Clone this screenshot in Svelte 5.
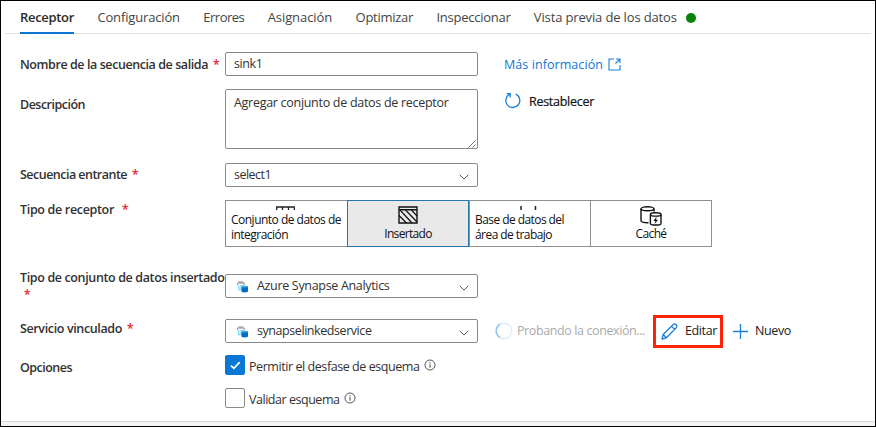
<script>
  const tabs = [
    { name: 'Receptor', w: 54, active: true },
    { name: 'Configuración', w: 82.5 },
    { name: 'Errores', w: 41 },
    { name: 'Asignación', w: 64.5 },
    { name: 'Optimizar', w: 57.5 },
    { name: 'Inspeccionar', w: 74 },
    { name: 'Vista previa de los datos', w: 143 }
  ];

  // Spreads the letters of a label so that it takes the given width.
  function fit(node, width) {
    const natural = node.getBoundingClientRect().width;
    node.style.letterSpacing = `${(width - natural) / node.textContent.length}px`;
  }
</script>

{#snippet t(text, width)}<span class="t" use:fit={width}>{text}</span>{/snippet}

{#snippet chevron()}
  <svg class="chev" width="10" height="6" viewBox="0 0 10 6"><path d="M.7 .8 5 5 9.3 .8" fill="none" stroke="#555" stroke-width="1" /></svg>
{/snippet}

{#snippet synapse()}
  <svg class="syn" width="13" height="13" viewBox="0 0 13 13">
    <path d="M.8 5V3.2L3 1.2H6.6L9 3.2V5H7.8V3.8H2V5z" fill="#a9a9a9" />
    <path d="M2 5h1.5v1.5H2zM4.3 5h1.5v1.5H4.3zM6.5 4.7H8v1.2H6.5zM2 7.2h1.5v1.5H2zM4.3 7.2h1v1.5h-1zM2 9.3h3v1H2z" fill="#5fd6f2" />
    <path d="M5.4 6.8v4.4c0 1.6 6.6 1.6 6.6 0V6.8z" fill="#0669c4" />
    <ellipse cx="8.7" cy="6.7" rx="3.3" ry=".9" fill="#38a6e8" />
  </svg>
{/snippet}

{#snippet info()}
  <svg class="info" width="12" height="12" viewBox="0 0 12 12"><circle cx="6" cy="6" r="5" fill="none" stroke="#444" stroke-width=".9" /><path d="M6 5.2V8.7M6 3.2v1.1" stroke="#444" stroke-width="1" /></svg>
{/snippet}

<div class="panel">
  <nav class="tabs">
    {#each tabs as tab}
      <div class="tab" class:active={tab.active}>{@render t(tab.name, tab.w)}</div>
    {/each}
    <i class="dot"></i>
  </nav>

  <div class="form">
    <div class="row name">
      <div class="label">{@render t('Nombre de la secuencia de salida', 188)}<b>*</b></div>
      <div class="box">{@render t('sink1', 28.5)}</div>
      <div class="side link">
        {@render t('Más información', 99)}
        <svg class="ext" width="13" height="13" viewBox="0 0 13 13"><path d="M6 1H1v11h11V7M8 1h4v4M12 1 7.5 5.5" fill="none" stroke="#1a7fd8" stroke-width="1.1" /></svg>
      </div>
    </div>

    <div class="row desc">
      <div class="label">{@render t('Descripción', 65)}</div>
      <div class="box area">
        {@render t('Agregar conjunto de datos de receptor', 214.5)}
        <svg class="grip" width="8" height="8" viewBox="0 0 8 8"><path d="M.5 7.5l7-7M4.5 7.5l3-3" stroke="#777" /></svg>
      </div>
      <div class="side reset">
        <svg width="17" height="17" viewBox="0 0 17 17"><path d="M5.4 2.4A7 7 0 1 0 11.8 2.2M2.6 1.6h3.6v3.8" fill="none" stroke="#1a7fd8" stroke-width="1.3" /></svg>
        {@render t('Restablecer', 65)}
      </div>
    </div>

    <div class="row incoming">
      <div class="label">{@render t('Secuencia entrante', 107)}<b>*</b></div>
      <div class="box">{@render t('select1', 37)}{@render chevron()}</div>
    </div>

    <div class="row kind">
      <div class="label">{@render t('Tipo de receptor', 94)}<b class="far">*</b></div>
      <div class="tiles">
        <div class="tile">
          <svg width="19" height="4" viewBox="0 0 19 4"><path d="M.7 4V1H18.3V4M6.5 1v3M12.5 1v3" fill="none" stroke="#222" stroke-width="1.3" /></svg>
          <div>{@render t('Conjunto de datos de', 110)}</div>
          <div>{@render t('integración', 57)}</div>
        </div>
        <div class="tile center selected">
          <svg width="20" height="18" viewBox="0 0 20 18"><path d="M1 1h18v16H1zM1 3.8h18" fill="none" stroke="#111" stroke-width="1.4" /><path d="M1 9.5l7.5 7.5M2 4l12 13M7.5 4l11.5 12M13.5 4l5.5 6" fill="none" stroke="#111" stroke-width="1.2" /></svg>
          <div>{@render t('Insertado', 47.5)}</div>
        </div>
        <div class="tile">
          <svg class="ticks" width="19" height="4" viewBox="0 0 19 4"><path d="M2 0v4M16.5 0v4" stroke="#222" stroke-width="1.5" /></svg>
          <div>{@render t('Base de datos del', 89)}</div>
          <div>{@render t('área de trabajo', 77)}</div>
        </div>
        <div class="tile center last">
          <svg width="22" height="20" viewBox="0 0 22 20"><g fill="none" stroke="#111" stroke-width="1.4"><ellipse cx="7.5" cy="2.8" rx="6.5" ry="2" /><path d="M1 2.8v12c0 1.4 3.5 2.1 7.5 2M14 2.8v3" /><ellipse cx="15.7" cy="8.4" rx="5.3" ry="1.7" /><path d="M10.4 8.4v9c0 2.2 10.6 2.2 10.6 0v-9" /></g><path d="M16.7 10.6 13.4 15h2l-.8 3 3.5-4.2h-2.1z" fill="#111" /></svg>
          <div>{@render t('Caché', 31)}</div>
        </div>
      </div>
    </div>

    <div class="row inline">
      <div class="label">{@render t('Tipo de conjunto de datos insertado', 204.5)}<b class="below">*</b></div>
      <div class="box">{@render synapse()}{@render t('Azure Synapse Analytics', 132.5)}{@render chevron()}</div>
    </div>

    <div class="row linked">
      <div class="label">{@render t('Servicio vinculado', 102)}<b>*</b></div>
      <div class="box">{@render synapse()}{@render t('synapselinkedservice', 114.5)}{@render chevron()}</div>
      <div class="side actions">
        <svg class="spin" width="18" height="18" viewBox="0 0 18 18"><circle cx="9" cy="9" r="7.8" fill="none" stroke="#dcebf8" stroke-width="1.4" /><path d="M5.2 2.2A7.8 7.8 0 0 0 4.9 15.6" fill="none" stroke="#94c3ed" stroke-width="1.5" /></svg>
        <span class="testing">{@render t('Probando la conexión...', 128)}</span>
        <div class="edit">
          <svg width="17" height="17" viewBox="0 0 17 17"><path d="M1 16 2.2 11.5 12 1.7a2.1 2.1 0 0 1 3.2 3.2L5.4 14.8zM10.5 3.2l3.2 3.2M2.2 11.5l3.2 3.3" fill="none" stroke="#1a7fd8" stroke-width="1.3" stroke-linejoin="round" /></svg>
          {@render t('Editar', 32)}
        </div>
        <svg class="plus" width="15" height="15" viewBox="0 0 15 15"><path d="M7.5 0v15M0 7.5h15" stroke="#1a7fd8" stroke-width="1.3" /></svg>
        {@render t('Nuevo', 36)}
      </div>
    </div>

    <div class="row options">
      <div class="label">{@render t('Opciones', 52)}</div>
      <div class="checks">
        <div class="check">
          <span class="cb on"><svg width="11" height="9" viewBox="0 0 11 9"><path d="M1 4.6 3.9 7.4 9.7 1.2" fill="none" stroke="#fff" stroke-width="1.7" /></svg></span>
          {@render t('Permitir el desfase de esquema', 170.5)}
          {@render info()}
        </div>
        <div class="check">
          <span class="cb"></span>
          {@render t('Validar esquema', 90.5)}
          {@render info()}
        </div>
      </div>
    </div>
  </div>
  <div class="foot"></div>
</div>

<style>
  .panel {
    box-sizing: border-box;
    width: 876px;
    height: 427px;
    border: 1px solid #000;
    background: #fff;
    font: 12.5px/16px 'Open Sans', 'Noto Sans', sans-serif;
    color: #323130;
    display: flex;
    flex-direction: column;
    overflow: hidden;
  }
  .t { display: inline-block; white-space: nowrap; flex: none; }
  svg { display: block; flex: none; }
  .tabs {
    box-sizing: border-box;
    height: 33px;
    margin: 0 4px;
    padding: 8px 0 0 15px;
    display: flex;
    gap: 23.4px;
    font-size: 13px;
    color: #444;
    border-bottom: 1px solid #e1e1e1;
  }
  .tab { height: 23px; flex: none; }
  .active { font-weight: 600; color: #2b2a29; border-bottom: 2px solid #0b76d1; }
  .dot { width: 10px; height: 10px; margin: 4px 0 0 -14.4px; border-radius: 50%; background: #078407; }
  .form { flex: 1; padding-left: 19px; }
  .row { display: grid; grid-template-columns: 205px 253px 1fr; }
  .label { font-weight: 600; white-space: nowrap; }
  .label b { color: #e81123; margin-left: 5px; font-size: 12px; font-weight: 400; -webkit-text-stroke: .2px; }
  .label b.far { margin-left: 8px; }
  .label b.below { display: block; margin-left: 4px; }
  .box {
    box-sizing: border-box;
    height: 24px;
    border: 1px solid #8b8a89;
    border-radius: 2px;
    padding: 0 8px;
    display: flex;
    align-items: center;
  }
  .chev { margin: 3px 0 0 auto; }
  .syn { margin: 0 8px 0 2px; }
  .side { padding-left: 26px; display: flex; }

  .name { height: 37px; padding-top: 18px; }
  .name .label { padding-top: 5px; }
  .link { color: #0f78d4; padding-top: 5px; }
  .ext { margin: 1px 0 0 5px; }

  .desc { height: 74px; }
  .desc .label { padding-top: 8px; }
  .area { height: 60px; align-items: flex-start; padding: 5px 0 0 8px; }
  .grip { margin: 45px 1px 0 auto; }
  .reset { color: #111; padding-top: 3px; gap: 8px; }
  .reset .t { margin-top: 2px; -webkit-text-stroke: .2px; }

  .incoming { height: 37px; }
  .incoming .label { padding-top: 4px; }
  .incoming .t { position: relative; top: 0; }

  .kind { height: 74px; grid-template-columns: 205px 1fr; }
  .kind .label { padding-top: 2px; }
  .tiles { display: grid; grid-template-columns: 122px 122px 121px 122px; height: 47px; color: #111; font-size: 12px; line-height: 15px; }
  .tile { box-sizing: border-box; height: 47px; border: 1px solid #8f8f8f; border-right: 0; padding: 5px 0 0 5px; }
  .tile > div { height: 15px; }
  .tile .t { display: block; width: max-content; }
  .tile svg { margin-left: 45px; margin-bottom: 2px; }
  .tile .ticks { margin-left: 44px; }
  .center { display: flex; flex-direction: column; align-items: center; padding: 5px 0 0; }
  .center svg { margin: 0; }
  .center > div { margin-top: auto; margin-bottom: 5px; }
  .selected { background: #e9e9e9; border: 1px solid #2775ad; }
  .last { border-right: 1px solid #8f8f8f; }

  .inline { height: 45px; }
  .inline .label { margin-top: -5px; line-height: 17px; }
  .linked { height: 36px; }
  .linked .label { padding-top: 2px; }
  .actions { padding-left: 17px; height: 24px; align-items: center; color: #222; }
  .spin { margin-right: 4px; }
  .testing { color: #aaa; display: flex; }
  .edit {
    box-sizing: border-box;
    flex: none;
    width: 70px;
    height: 33px;
    margin: -5px 10px -5px 8px;
    border: 3px solid #fb2408;
    display: flex;
    align-items: center;
    gap: 7px;
    padding-left: 5px;
  }
  .plus { margin-right: 7px; }

  .options .label { padding-top: 5px; }
  .check { display: flex; height: 33px; }
  .check .t { margin: 4px 4px 0 4px; }
  .cb { box-sizing: border-box; width: 20px; height: 20px; border: 1px solid #8b8a89; border-radius: 2px; display: flex; align-items: center; justify-content: center; }
  .on { background: #0878d4; border-color: #0878d4; }
  .info { margin-top: 4px; }
  .foot { height: 4px; background: #f3f5f8; border-top: 1px solid #d5d7d9; }
</style>
